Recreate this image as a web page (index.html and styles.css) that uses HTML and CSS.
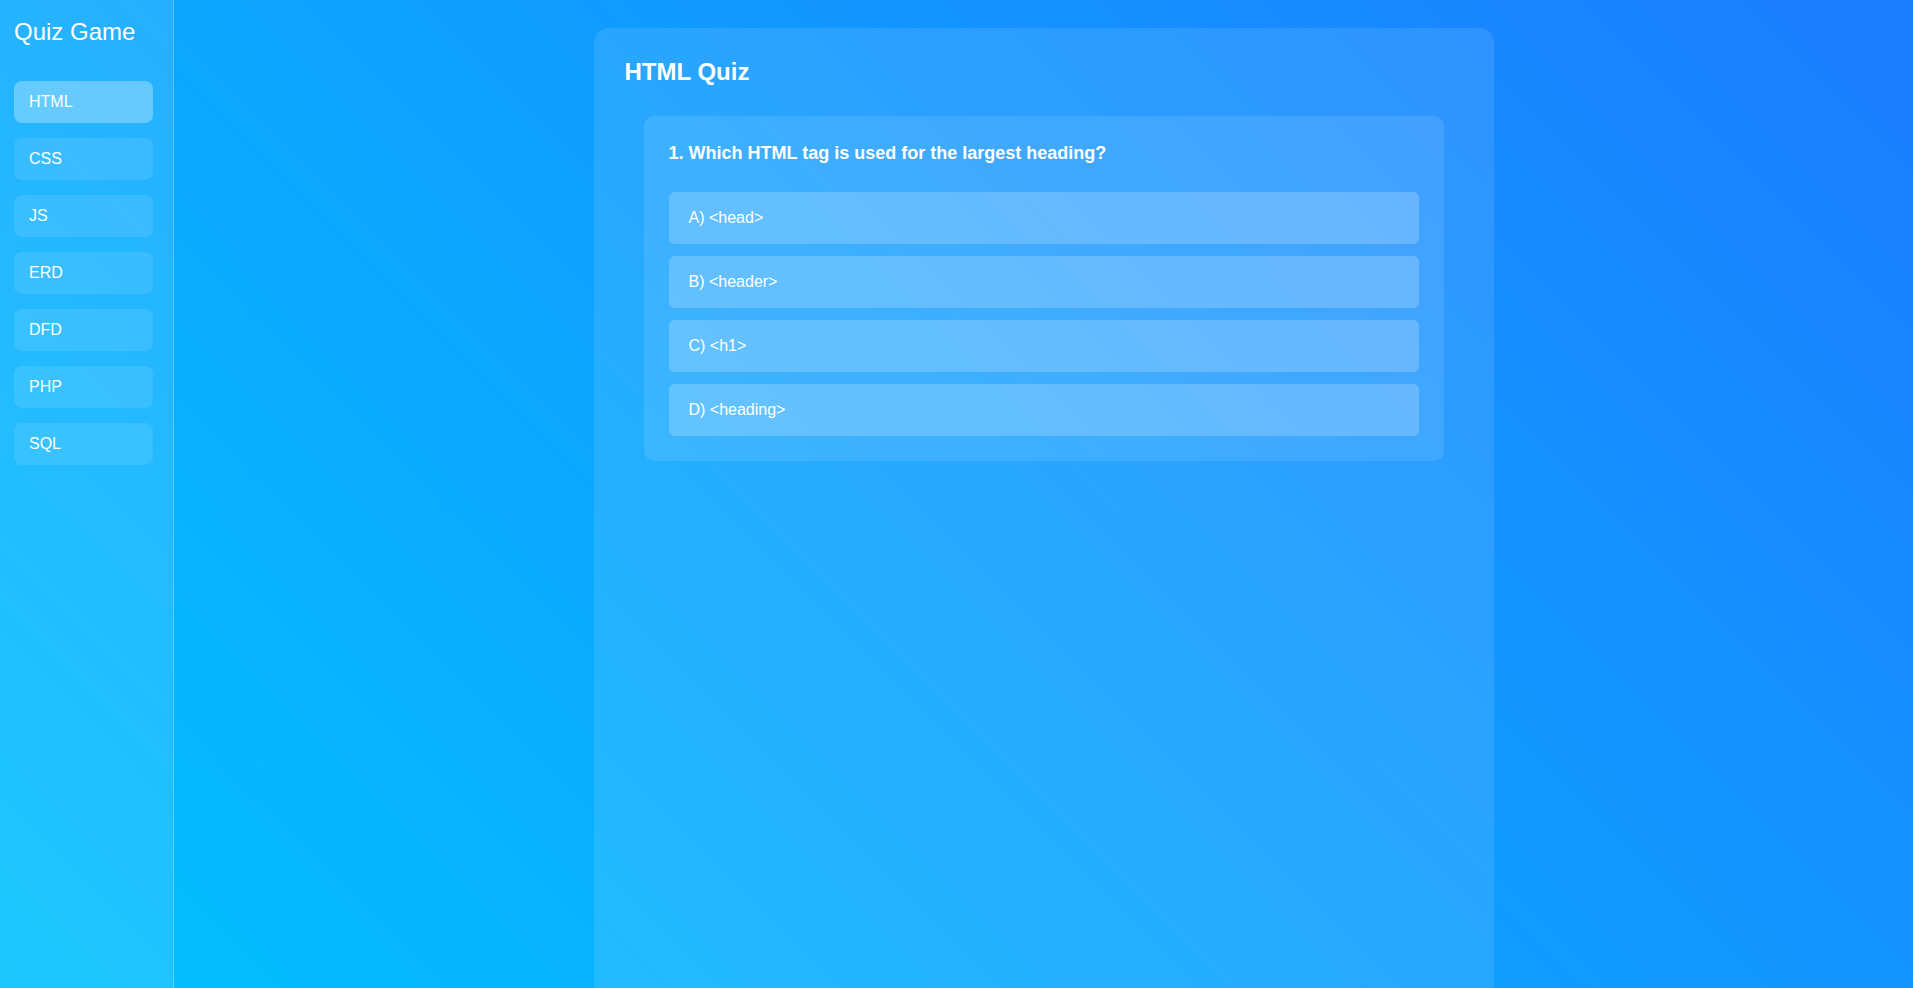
FILE: index.html
```html
<!DOCTYPE html>
<html lang="en">
<head>
<meta charset="utf-8">
<title>Quiz Game</title>
<link rel="stylesheet" href="styles.css">
</head>
<body>
<div class="app">
  <aside class="sidebar">
    <h1 class="brand">Quiz Game</h1>
    <nav class="nav">
      <button class="nav-btn active">HTML</button>
      <button class="nav-btn">CSS</button>
      <button class="nav-btn">JS</button>
      <button class="nav-btn">ERD</button>
      <button class="nav-btn">DFD</button>
      <button class="nav-btn">PHP</button>
      <button class="nav-btn">SQL</button>
    </nav>
  </aside>
  <main class="main">
    <section class="card">
      <h2 class="card-title">HTML Quiz</h2>
      <div class="question">
        <h3 class="question-text">1. Which HTML tag is used for the largest heading?</h3>
        <div class="options">
          <div class="option">A) &lt;head&gt;</div>
          <div class="option">B) &lt;header&gt;</div>
          <div class="option">C) &lt;h1&gt;</div>
          <div class="option">D) &lt;heading&gt;</div>
        </div>
      </div>
    </section>
  </main>
</div>
</body>
</html>
```

FILE: styles.css
```css
* {
  box-sizing: border-box;
}

html, body {
  margin: 0;
  padding: 0;
  height: 100%;
}

body {
  font-family: "Liberation Sans", Arial, sans-serif;
  color: #fff;
  background: linear-gradient(45deg, #02c2ff 0%, #1c7cff 100%);
  overflow: hidden;
}

.app {
  display: flex;
  height: 100vh;
  overflow: hidden;
}

.sidebar {
  width: 174px;
  flex: 0 0 174px;
  padding: 14px;
  background: rgba(255, 255, 255, 0.11);
  border-right: 1px solid rgba(255, 255, 255, 0.22);
}

.brand {
  margin: 4px 0 35px;
  font-size: 24px;
  font-weight: normal;
  line-height: normal;
}

.nav {
  display: flex;
  flex-direction: column;
  gap: 15px;
}

.nav-btn {
  width: 139px;
  padding: 12px 15px;
  border: none;
  border-radius: 8px;
  background: rgba(255, 255, 255, 0.1);
  color: #fff;
  font-family: inherit;
  font-size: 16px;
  line-height: normal;
  text-align: left;
  cursor: pointer;
}

.nav-btn.active {
  background: rgba(255, 255, 255, 0.3);
}

.main {
  flex: 1;
  padding: 28px 20px 0;
  overflow: hidden;
}

.card {
  max-width: 900px;
  margin: 0 auto;
  min-height: 1100px;
  padding: 30px;
  border-radius: 15px;
  background: rgba(255, 255, 255, 0.1);
}

.card-title {
  margin: 0 0 30px 1px;
  font-size: 24px;
  font-weight: bold;
  line-height: normal;
}

.question {
  max-width: 800px;
  margin: 0 auto;
  padding: 25px;
  border-radius: 10px;
  background: rgba(255, 255, 255, 0.1);
}

.question-text {
  margin: 2px 0 28px;
  font-size: 18px;
  font-weight: bold;
  line-height: normal;
}

.options {
  display: flex;
  flex-direction: column;
  gap: 12px;
}

.option {
  padding: 17px 20px;
  border-radius: 6px;
  background: rgba(255, 255, 255, 0.2);
  font-size: 16px;
  line-height: normal;
}
```
